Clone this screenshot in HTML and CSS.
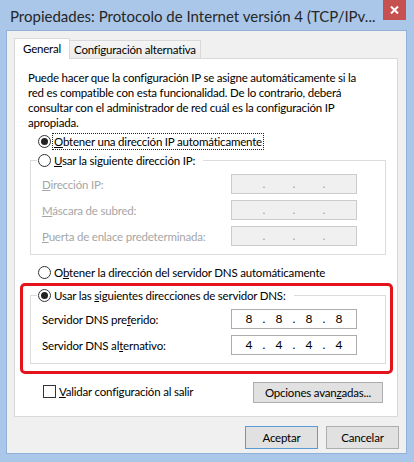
FILE: index.html
```html
<!DOCTYPE html>
<html>
<head>
    <title>Propiedades: Protocolo de Internet versión 4 (TCP/IPv4)</title>
    <link rel="stylesheet" href="styles.css">
</head>
<body>
    <div class="window">
        <div class="titlebar">
            <span class="title">Propiedades: Protocolo de Internet versión 4 (TCP/IPv...</span>
            <div class="close-btn">
                <svg width="9" height="8" viewBox="0 0 9 8">
                    <path d="M1 0.5 L8 7.5 M8 0.5 L1 7.5" stroke="#fff" stroke-width="2"/>
                </svg>
            </div>
        </div>

        <div class="client">
            <div class="tabs">
                <div class="tab tab-active">General</div>
                <div class="tab">Configuración alternativa</div>
            </div>

            <div class="panel">
                <p class="intro">
                    Puede hacer que la configuración IP se asigne automáticamente si la<br>
                    red es compatible con esta funcionalidad. De lo contrario, deberá<br>
                    consultar con el administrador de red cuál es la configuración IP<br>
                    apropiada.
                </p>

                <div class="option option-first">
                    <span class="radio checked"></span>
                    <span class="option-text focused"><u>O</u>btener una dirección IP automáticamente</span>
                </div>

                <fieldset class="group">
                    <legend>
                        <span class="option">
                            <span class="radio"></span>
                            <span class="option-text"><u>U</u>sar la siguiente dirección IP:</span>
                        </span>
                    </legend>
                    <div class="field disabled">
                        <span class="field-label"><u>D</u>irección IP:</span>
                        <div class="ip-box">
                            <span></span><span>.</span><span></span><span>.</span><span></span><span>.</span><span></span>
                        </div>
                    </div>
                    <div class="field disabled">
                        <span class="field-label"><u>M</u>áscara de subred:</span>
                        <div class="ip-box">
                            <span></span><span>.</span><span></span><span>.</span><span></span><span>.</span><span></span>
                        </div>
                    </div>
                    <div class="field disabled">
                        <span class="field-label"><u>P</u>uerta de enlace predeterminada:</span>
                        <div class="ip-box">
                            <span></span><span>.</span><span></span><span>.</span><span></span><span>.</span><span></span>
                        </div>
                    </div>
                </fieldset>

                <div class="option option-dns">
                    <span class="radio"></span>
                    <span class="option-text">O<u>b</u>tener la dirección del servidor DNS automáticamente</span>
                </div>

                <div class="highlight">
                    <fieldset class="group group-dns">
                        <legend>
                            <span class="option">
                                <span class="radio checked"></span>
                                <span class="option-text">Usar las <u>s</u>iguientes direcciones de servidor DNS:</span>
                            </span>
                        </legend>
                        <div class="field">
                            <span class="field-label">Servidor DNS pre<u>f</u>erido:</span>
                            <div class="ip-box">
                                <span>8</span><span>.</span><span>8</span><span>.</span><span>8</span><span>.</span><span>8</span>
                            </div>
                        </div>
                        <div class="field">
                            <span class="field-label">Servidor DNS al<u>t</u>ernativo:</span>
                            <div class="ip-box">
                                <span>4</span><span>.</span><span>4</span><span>.</span><span>4</span><span>.</span><span>4</span>
                            </div>
                        </div>
                    </fieldset>
                </div>

                <div class="panel-footer">
                    <div class="check-row">
                        <span class="checkbox"></span>
                        <span><u>V</u>alidar configuración al salir</span>
                    </div>
                    <button class="btn btn-advanced">Opciones avan<u>z</u>adas...</button>
                </div>
            </div>

            <div class="actions">
                <button class="btn btn-default">Aceptar</button>
                <button class="btn">Cancelar</button>
            </div>
        </div>
    </div>
</body>
</html>
```

FILE: styles.css
```css
/* Page */
body {
    margin: 0;
    font-family: 'Lato', 'Noto Sans', sans-serif;
    font-size: 11.5px;
    letter-spacing: -0.2px;
    color: #000;
}

/* Window frame */
.window {
    width: 414px;
    height: 462px;
    background-color: #aac7e9;
    display: flex;
    flex-direction: column;
}

.titlebar {
    height: 31px;
    display: flex;
    justify-content: space-between;
    align-items: flex-start;
    flex-shrink: 0;
}

.title {
    padding: 6px 0 0 10px;
    font-size: 15px;
    letter-spacing: 0;
    line-height: 20px;
    color: #262626;
    white-space: nowrap;
}

.close-btn {
    width: 23px;
    height: 20px;
    margin-right: 8px;
    background-color: #c75050;
    display: flex;
    align-items: center;
    justify-content: center;
}

.close-btn svg {
    display: block;
}

/* Client area */
.client {
    flex: 1;
    margin: 0 8px 9px 7px;
    padding: 8px 8px 0 7px;
    background-color: #f0f0f0;
    box-shadow: 0 0 0 1px #92b1d8;
}

/* Tabs */
.tabs {
    display: flex;
    align-items: flex-end;
    height: 19px;
}

.tab {
    height: 17px;
    padding: 0 4px 0 4px;
    margin-left: -1px;
    line-height: 17px;
    border: 1px solid #d9d9d9;
    border-bottom: none;
    background: linear-gradient(#f5f5f5, #ebebeb);
}

.tab-active {
    position: relative;
    z-index: 1;
    height: 20px;
    margin: 0 0 -1px 0;
    padding: 0 8px 0 8px;
    line-height: 19px;
    background: #fff;
}

.panel {
    height: 357px;
    border: 1px solid #d9d9d9;
    background-color: #fff;
}

.intro {
    margin: 11px 0 0 13px;
    line-height: 15px;
}

/* Radio rows */
.option {
    display: flex;
    align-items: center;
    height: 16px;
}

.option-first {
    height: 17px;
    margin: 3px 0 0 23px;
}

.option-dns {
    margin: 9px 0 0 23px;
}

.radio {
    width: 11px;
    height: 11px;
    border: 1px solid #333;
    border-radius: 50%;
    background: #fff;
    display: flex;
    align-items: center;
    justify-content: center;
    flex-shrink: 0;
}

.radio.checked::after {
    content: "";
    width: 7px;
    height: 7px;
    border-radius: 50%;
    background: #222;
}

.option-text {
    margin-left: 2px;
    padding: 0 1px;
    line-height: 15px;
    white-space: nowrap;
}

.focused {
    outline: 1px dotted #222;
}

/* Group boxes */
.group {
    margin: 2px 11px 0 15px;
    padding: 6px 0 8px 11px;
    border: 1px solid #dcdcdc;
    min-width: 0;
}

.group legend {
    margin-left: -5px;
    padding: 0 7px 0 1px;
}

.field {
    display: flex;
    align-items: center;
    height: 20px;
}

.field + .field {
    margin-top: 6px;
}

.field-label {
    width: 189px;
}

.ip-box {
    box-sizing: border-box;
    width: 126px;
    height: 20px;
    padding-left: 6px;
    border: 1px solid #acacac;
    background: #fff;
    display: grid;
    grid-template-columns: 22px 8px 22px 8px 22px 8px 22px;
    line-height: 18px;
    font-size: 12px;
    letter-spacing: 0;
    text-align: center;
}

.disabled .field-label {
    color: #a6a6a6;
}

.disabled .ip-box {
    background: #f0f0f0;
    border-color: #cccccc;
    color: #a0a0a0;
}

/* Red highlight round the DNS box */
.highlight {
    margin: 3px 4px 0 5px;
    padding: 1px 4px 7px 7px;
    border: 3px solid #e3141c;
    border-radius: 5px;
}

.group-dns {
    margin: 0;
}

/* Bottom of the tab page */
.panel-footer {
    display: flex;
    justify-content: space-between;
    align-items: center;
    margin: 8px 14px 0 28px;
}

.check-row {
    display: flex;
    align-items: center;
    margin-top: -2px;
}

.checkbox {
    width: 11px;
    height: 11px;
    margin-right: 3px;
    border: 1px solid #333;
    background: #fff;
}

/* Buttons */
.btn {
    box-sizing: border-box;
    height: 23px;
    width: 73px;
    padding: 0;
    border: 1px solid #adadad;
    background-color: #e1e1e1;
    font-family: inherit;
    font-size: 11.5px;
    letter-spacing: -0.2px;
    color: #000;
}

.btn-advanced {
    width: 130px;
    height: 21px;
}

.btn-default {
    border-color: #5c9ad6;
}

.actions {
    display: flex;
    justify-content: flex-end;
    gap: 8px;
    margin-top: 9px;
    margin-right: -1px;
}
```
